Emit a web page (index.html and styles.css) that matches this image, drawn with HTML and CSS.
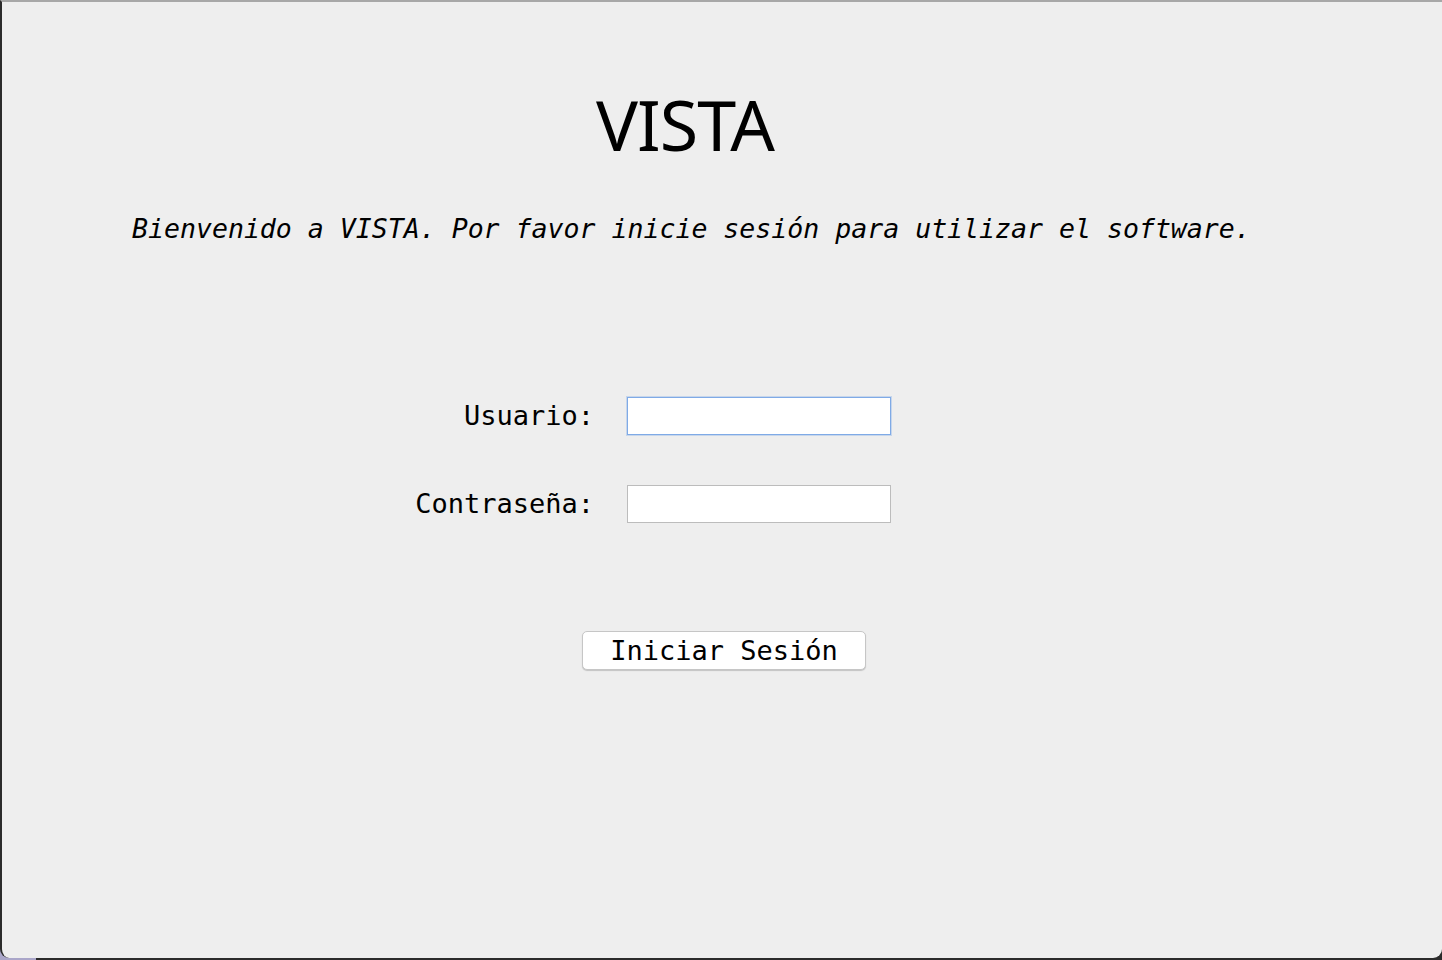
FILE: index.html
```html
<!DOCTYPE html>
<html lang="es">
<head>
<meta charset="utf-8">
<title>VISTA</title>
<link rel="stylesheet" href="styles.css">
</head>
<body>
<div class="window">
  <h1 class="title">VISTA</h1>
  <p class="subtitle">Bienvenido a VISTA. Por favor inicie sesión para utilizar el software.</p>
  <form class="login">
    <label class="label" for="user">Usuario:</label>
    <input class="field field-focus" id="user" type="text">
    <label class="label" for="pass">Contraseña:</label>
    <input class="field" id="pass" type="password">
  </form>
  <div class="actions">
    <button class="btn" type="button">Iniciar Sesión</button>
  </div>
</div>
</body>
</html>
```

FILE: styles.css
```css
html, body {
  margin: 0;
  padding: 0;
}
body {
  width: 1442px;
  height: 960px;
  overflow: hidden;
  background: linear-gradient(to right, #aaa6c9 0, #aaa6c9 36px, #2b2b2b 36px);
}
.window {
  box-sizing: border-box;
  height: 958px;
  width: 1442px;
  background: #eeeeee;
  border-top: 2px solid #a7a7a7;
  border-left: 2px solid #2b2b2b;
  border-radius: 0 0 9px 9px;
  padding-top: 87px;
  display: flex;
  flex-direction: column;
}
.title {
  margin: 0;
  width: 1366px;
  text-align: center;
  font-family: "Noto Sans", "Open Sans", sans-serif;
  font-weight: 400;
  font-size: 70px;
  line-height: 70px;
  letter-spacing: -1px;
  color: #000;
}
.subtitle {
  margin: 56px 0 0 0;
  padding-left: 130px;
  font-family: "DejaVu Sans Mono", monospace;
  font-style: italic;
  font-size: 26.55px;
  line-height: 27px;
  color: #000;
  white-space: nowrap;
}
.login {
  margin: 155px 0 0 0;
  display: grid;
  grid-template-columns: 592px 264px;
  column-gap: 33px;
  row-gap: 50px;
  align-items: center;
}
.label {
  justify-self: end;
  font-family: "DejaVu Sans Mono", monospace;
  font-size: 27px;
  line-height: 38px;
  color: #000;
  white-space: nowrap;
}
.field {
  box-sizing: border-box;
  width: 264px;
  height: 38px;
  margin: 0;
  padding: 0 6px;
  background: #fff;
  border: 1px solid #bcbcbc;
  border-radius: 0;
  outline: none;
  font-family: "DejaVu Sans Mono", monospace;
  font-size: 20px;
}
.field-focus {
  border: 1px solid #7faae6;
  box-shadow: 0 0 0 1px rgba(127, 170, 230, 0.35);
}
.actions {
  margin-top: 108px;
  padding-left: 580px;
}
.btn {
  box-sizing: border-box;
  width: 284px;
  height: 39px;
  padding: 0;
  margin: 0;
  background: #fff;
  border: 1px solid #c6c6c6;
  border-radius: 5px;
  box-shadow: 0 1px 1px rgba(0, 0, 0, 0.18);
  font-family: "DejaVu Sans Mono", monospace;
  font-size: 27px;
  line-height: 37px;
  color: #000;
  text-align: center;
}
```
